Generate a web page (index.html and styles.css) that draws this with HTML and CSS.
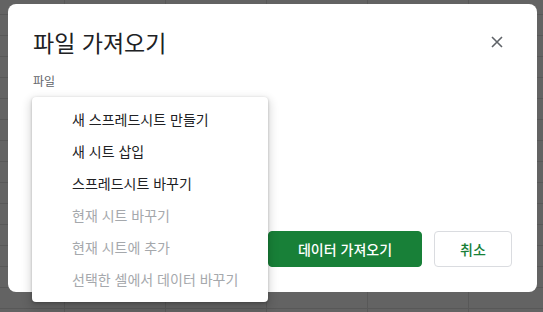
FILE: index.html
```html
<!DOCTYPE html>
<html lang="ko">
<head>
    <meta charset="UTF-8">
    <meta name="viewport" content="width=device-width, initial-scale=1.0">
    <title>파일 가져오기</title>
    <link rel="stylesheet" href="styles.css">
</head>
<body>
    <div class="dialog">
        <div class="dialog-header">
            <h1 class="dialog-title">파일 가져오기</h1>
            <button class="close-btn" aria-label="닫기">
                <svg width="12" height="12" viewBox="0 0 12 12">
                    <path d="M1 1 L11 11 M11 1 L1 11" stroke="#5f6368" stroke-width="1.6" fill="none"/>
                </svg>
            </button>
        </div>

        <div class="field-label">파일</div>
        <div class="field">
            <div class="select"></div>
            <ul class="menu">
                <li class="menu-item">새 스프레드시트 만들기</li>
                <li class="menu-item">새 시트 삽입</li>
                <li class="menu-item">스프레드시트 바꾸기</li>
                <li class="menu-item disabled">현재 시트 바꾸기</li>
                <li class="menu-item disabled">현재 시트에 추가</li>
                <li class="menu-item disabled">선택한 셀에서 데이터 바꾸기</li>
            </ul>
        </div>

        <div class="dialog-footer">
            <button class="btn btn-primary">데이터 가져오기</button>
            <button class="btn btn-cancel">취소</button>
        </div>
    </div>
</body>
</html>
```

FILE: styles.css
```css
* {
    box-sizing: border-box;
    font-family: "Noto Sans CJK KR", "Noto Sans", sans-serif;
}
body {
    margin: 0;
    height: 312px;
    overflow: hidden;
    background-color: #636363;
    background-image:
        repeating-linear-gradient(to right, transparent 0 64px, #585858 64px 65px, transparent 65px 101px),
        repeating-linear-gradient(to bottom, transparent 0 14px, #585858 14px 15px, transparent 15px 21px);
}
.dialog {
    margin: 4px 0 0 8px;
    width: 529px;
    height: 288px;
    background: #fff;
    border-radius: 8px;
    padding: 24px 25px 25px 25px;
    display: flex;
    flex-direction: column;
}
.dialog-header {
    display: flex;
    justify-content: space-between;
    align-items: center;
    height: 28px;
}
.dialog-title {
    margin: 0;
    font-size: 23px;
    line-height: 28px;
    font-weight: 400;
    color: #202124;
}
.close-btn {
    background: none;
    border: 0;
    padding: 0;
    width: 24px;
    height: 24px;
    margin-right: 3px;
    display: flex;
    align-items: center;
    justify-content: center;
}
.field-label {
    margin-top: 17px;
    font-size: 12px;
    line-height: 16px;
    color: #5f6368;
}
.field {
    position: relative;
    margin-top: 8px;
}
.select {
    height: 36px;
}
.menu {
    position: absolute;
    top: 0;
    left: -1px;
    width: 236px;
    margin: 0;
    padding: 6px 0 7px;
    list-style: none;
    background: #fff;
    border-radius: 4px;
    box-shadow: 0 1px 3px rgba(0, 0, 0, 0.25), 0 4px 8px 3px rgba(0, 0, 0, 0.12);
    z-index: 2;
}
.menu-item {
    height: 32px;
    line-height: 32px;
    padding-left: 40px;
    font-size: 14px;
    color: #202124;
}
.menu-item.disabled {
    color: #a5a8ac;
}
.dialog-footer {
    margin-top: auto;
    display: flex;
    justify-content: flex-end;
    gap: 12px;
}
.btn {
    height: 36px;
    border-radius: 4px;
    font-size: 14px;
    font-weight: 500;
    padding: 0 16px;
    background: #fff;
}
.btn-primary {
    min-width: 154px;
    background: #188038;
    border: 1px solid #188038;
    color: #fff;
}
.btn-cancel {
    min-width: 78px;
    border: 1px solid #dadce0;
    color: #188038;
}
```
